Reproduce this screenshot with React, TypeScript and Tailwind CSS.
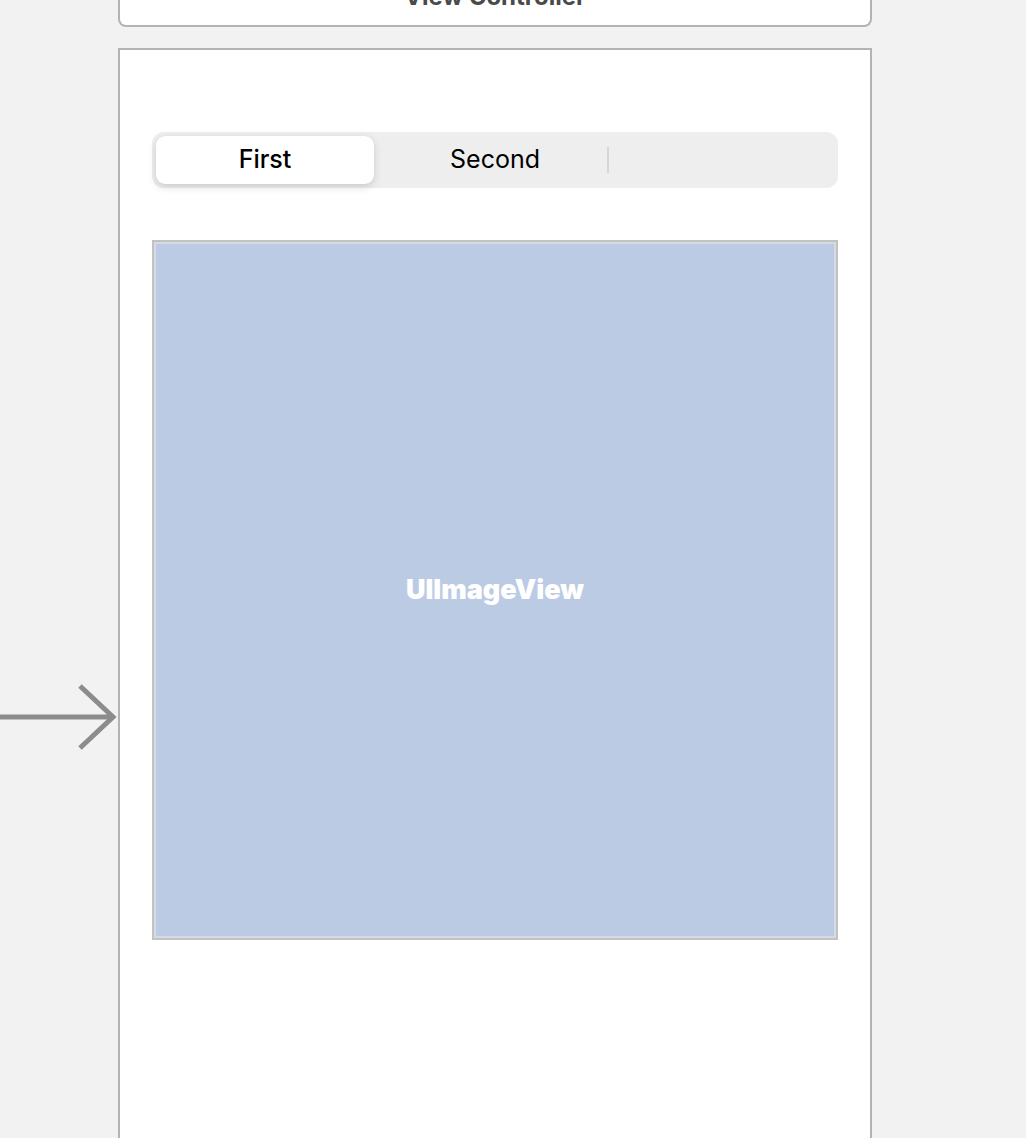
import React from 'react'

const segments = ['First', 'Second', '']

function SegmentedControl({ selected }: { selected: number }) {
  return (
    <div className="flex h-[56px] rounded-[12px] bg-[#eeeeee] p-[4px]">
      {segments.map((label, i) => (
        <div key={i} className="relative flex flex-1 items-center justify-center">
          {i === selected ? (
            <div className="mr-[8px] flex h-full w-full items-center justify-center rounded-[9px] bg-white shadow-[0_3px_8px_rgba(0,0,0,0.14),0_0_1px_rgba(0,0,0,0.1)]">
              <span className="text-[25px] font-medium text-black">{label}</span>
            </div>
          ) : (
            <span className="text-[25px] text-black">{label}</span>
          )}
          {i > selected && i < segments.length - 1 && (
            <div className="absolute right-[-1px] top-[11px] h-[26px] w-[2px] bg-[#d6d6d6]" />
          )}
        </div>
      ))}
    </div>
  )
}

export default function App() {
  return (
    <div
      className="relative h-[1138px] w-[1026px] overflow-hidden bg-[#f2f2f2]"
      style={{ fontFamily: 'Inter, "Liberation Sans", sans-serif' }}
    >
      {/* entry point arrow */}
      <svg className="absolute left-0 top-[680px]" width="120" height="74" viewBox="0 0 120 74">
        <path d="M0 37H114" stroke="#8c8c8c" strokeWidth="5" fill="none" />
        <path d="M80 6L113 37L80 68" stroke="#8c8c8c" strokeWidth="5" fill="none" />
      </svg>

      <div className="ml-[118px] flex w-[754px] flex-col">
        {/* previous scene, cut off at top */}
        <div className="mt-[-20px] flex h-[47px] items-start justify-center rounded-b-[8px] border-2 border-t-0 border-[#b3b3b3] bg-white">
          <span className="mt-[5px] text-[24px] font-bold leading-[24px] text-[#4a4a4a]">View Controller</span>
        </div>

        {/* scene */}
        <div className="mt-[21px] h-[1200px] border-2 border-[#b3b3b3] bg-white px-[32px] pt-[82px]">
          <SegmentedControl selected={0} />

          <div className="mt-[52px] h-[700px] border-2 border-[#c2c2c2]">
            <div className="flex h-full items-center justify-center border-2 border-[#d6dbe3] bg-[#bccbe4]">
              <span className="text-[27px] font-black text-white">UIImageView</span>
            </div>
          </div>
        </div>
      </div>
    </div>
  )
}
